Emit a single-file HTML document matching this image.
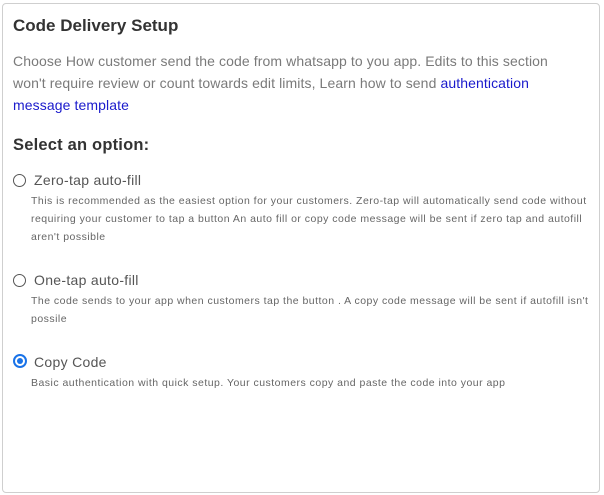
<!DOCTYPE html>
<html><head><style>
*{margin:0;padding:0;box-sizing:border-box}
body{width:604px;height:495px;background:#fff;font-family:"Liberation Sans",sans-serif;position:relative;overflow:hidden}
.card{position:absolute;left:2px;top:3px;width:598px;height:490px;border:1px solid #cfcfcf;border-radius:4px}
.t{position:absolute;white-space:nowrap}
h1{position:absolute;left:13px;top:16px;font-size:17px;font-weight:bold;color:#333;letter-spacing:0px}
.p{left:13px;font-size:14px;color:#7a7a7a;letter-spacing:0.1px}
.p a{color:#1a1acc;text-decoration:none}
.sel{left:13px;top:136px;font-size:16.5px;font-weight:bold;color:#333;letter-spacing:0.2px}
.r{position:absolute;left:13px;width:13px;height:13px;border:1.5px solid #555;border-radius:50%}
.r.on{border:2px solid #1a73e8;width:14px;height:14px}
.r.on::after{content:"";position:absolute;left:2px;top:2px;width:6px;height:6px;border-radius:50%;background:#1a73e8}
.l{left:34px;font-size:14px;color:#555;letter-spacing:0.3px}
.d{left:31px;font-size:10.5px;color:#666;letter-spacing:0.48px}
</style></head><body>
<div class="card"></div>
<h1>Code Delivery Setup</h1>
<div class="t p" style="top:53px">Choose How customer send the code from whatsapp to you app. Edits to this section</div>
<div class="t p" style="top:75px">won't require review or count towards edit limits, Learn how to send <a>authentication</a></div>
<div class="t p" style="top:97px"><a>message template</a></div>
<div class="t sel">Select an option:</div>

<div class="r" style="top:174px"></div>
<div class="t l" style="top:172px">Zero-tap auto-fill</div>
<div class="t d" style="top:195px">This is recommended as the easiest option for your customers. Zero-tap will automatically send code without</div>
<div class="t d" style="top:213px">requiring your customer to tap a button An auto fill or copy code message will be sent if zero tap and autofill</div>
<div class="t d" style="top:231px">aren't possible</div>

<div class="r" style="top:274px"></div>
<div class="t l" style="top:272px">One-tap auto-fill</div>
<div class="t d" style="top:295px">The code sends to your app when customers tap the button . A copy code message will be sent if autofill isn't</div>
<div class="t d" style="top:313px">possile</div>

<div class="r on" style="top:354px"></div>
<div class="t l" style="top:354px">Copy Code</div>
<div class="t d" style="top:377px">Basic authentication with quick setup. Your customers copy and paste the code into your app</div>
</body></html>
